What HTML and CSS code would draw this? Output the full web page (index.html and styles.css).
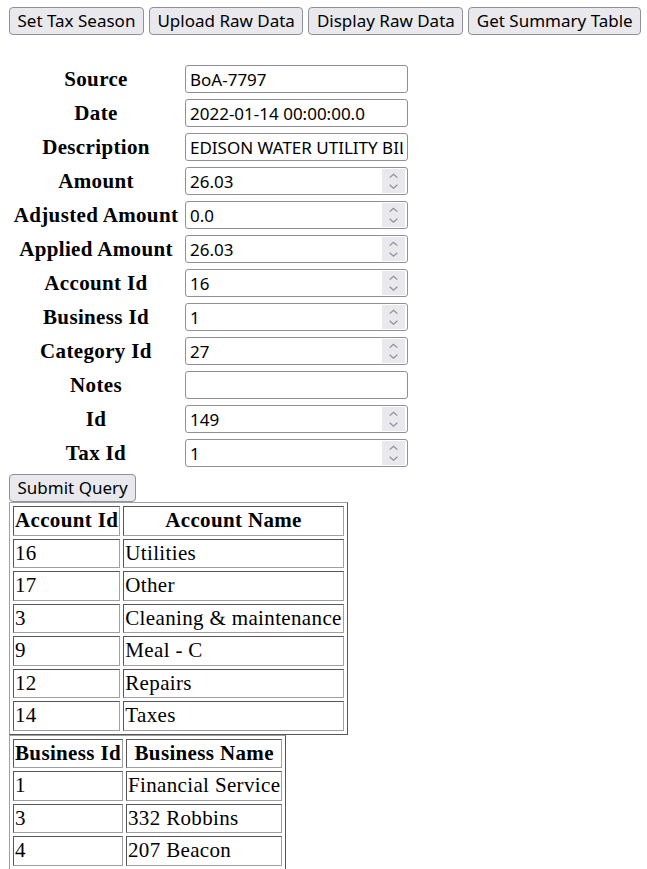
FILE: index.html
```html
<!DOCTYPE html>
<html>
<head>
<meta charset="utf-8">
<title>Tax</title>
<link rel="stylesheet" href="styles.css">
</head>
<body>
<div class="toolbar">
  <button class="btn">Set Tax Season</button>
  <button class="btn">Upload Raw Data</button>
  <button class="btn">Display Raw Data</button>
  <button class="btn">Get Summary Table</button>
</div>

<form class="entry">
  <table class="form-table">
    <tr><th>Source</th><td><span class="field"><input class="inp" type="text" value="BoA-7797"></span></td></tr>
    <tr><th>Date</th><td><span class="field"><input class="inp" type="text" value="2022-01-14 00:00:00.0"></span></td></tr>
    <tr><th>Description</th><td><span class="field"><input class="inp" type="text" value="EDISON WATER UTILITY BILL PAYMENT"></span></td></tr>
    <tr><th>Amount</th><td><span class="field num"><input class="inp" type="text" value="26.03"><span class="spin"><svg viewBox="0 0 23 25" width="23" height="25"><polyline points="7.5,9 11.5,5.5 15.5,9"/><polyline points="7.5,16.5 11.5,20 15.5,16.5"/></svg></span></span></td></tr>
    <tr><th>Adjusted Amount</th><td><span class="field num"><input class="inp" type="text" value="0.0"><span class="spin"><svg viewBox="0 0 23 25" width="23" height="25"><polyline points="7.5,9 11.5,5.5 15.5,9"/><polyline points="7.5,16.5 11.5,20 15.5,16.5"/></svg></span></span></td></tr>
    <tr><th>Applied Amount</th><td><span class="field num"><input class="inp" type="text" value="26.03"><span class="spin"><svg viewBox="0 0 23 25" width="23" height="25"><polyline points="7.5,9 11.5,5.5 15.5,9"/><polyline points="7.5,16.5 11.5,20 15.5,16.5"/></svg></span></span></td></tr>
    <tr><th>Account Id</th><td><span class="field num"><input class="inp" type="text" value="16"><span class="spin"><svg viewBox="0 0 23 25" width="23" height="25"><polyline points="7.5,9 11.5,5.5 15.5,9"/><polyline points="7.5,16.5 11.5,20 15.5,16.5"/></svg></span></span></td></tr>
    <tr><th>Business Id</th><td><span class="field num"><input class="inp" type="text" value="1"><span class="spin"><svg viewBox="0 0 23 25" width="23" height="25"><polyline points="7.5,9 11.5,5.5 15.5,9"/><polyline points="7.5,16.5 11.5,20 15.5,16.5"/></svg></span></span></td></tr>
    <tr><th>Category Id</th><td><span class="field num"><input class="inp" type="text" value="27"><span class="spin"><svg viewBox="0 0 23 25" width="23" height="25"><polyline points="7.5,9 11.5,5.5 15.5,9"/><polyline points="7.5,16.5 11.5,20 15.5,16.5"/></svg></span></span></td></tr>
    <tr><th>Notes</th><td><span class="field"><input class="inp" type="text" value=""></span></td></tr>
    <tr><th>Id</th><td><span class="field num"><input class="inp" type="text" value="149"><span class="spin"><svg viewBox="0 0 23 25" width="23" height="25"><polyline points="7.5,9 11.5,5.5 15.5,9"/><polyline points="7.5,16.5 11.5,20 15.5,16.5"/></svg></span></span></td></tr>
    <tr><th>Tax Id</th><td><span class="field num"><input class="inp" type="text" value="1"><span class="spin"><svg viewBox="0 0 23 25" width="23" height="25"><polyline points="7.5,9 11.5,5.5 15.5,9"/><polyline points="7.5,16.5 11.5,20 15.5,16.5"/></svg></span></span></td></tr>
  </table>
  <div class="submit-row"><button class="btn" type="button">Submit Query</button></div>
</form>

<table class="data-table">
  <tr><th>Account Id</th><th>Account Name</th></tr>
  <tr><td>16</td><td>Utilities</td></tr>
  <tr><td>17</td><td>Other</td></tr>
  <tr><td>3</td><td>Cleaning &amp; maintenance</td></tr>
  <tr><td>9</td><td>Meal - C</td></tr>
  <tr><td>12</td><td>Repairs</td></tr>
  <tr><td>14</td><td>Taxes</td></tr>
</table>
<table class="data-table">
  <tr><th>Business Id</th><th>Business Name</th></tr>
  <tr><td>1</td><td>Financial Service</td></tr>
  <tr><td>3</td><td>332 Robbins</td></tr>
  <tr><td>4</td><td>207 Beacon</td></tr>
</table>
</body>
</html>
```

FILE: styles.css
```css
html, body {
  margin: 0;
  padding: 0;
  background: #ffffff;
  color: #000000;
}

body {
  padding: 7px 0 0 9px;
  font-family: "Liberation Serif", "Times New Roman", serif;
}

.toolbar {
  display: flex;
  gap: 5px;
}

.btn {
  box-sizing: border-box;
  height: 28px;
  margin: 0;
  padding: 0 7.5px;
  border: 1px solid #8f8f9d;
  border-radius: 4px;
  background: #e9e9ed;
  color: #000;
  font-family: "Noto Sans", "Open Sans", sans-serif;
  font-size: 17px;
  line-height: 26px;
  white-space: nowrap;
}

.entry {
  margin: 0;
}

.form-table {
  margin-top: 27px;
  border-collapse: separate;
  border-spacing: 0;
}

.form-table th {
  width: 174px;
  padding: 3px 0;
  text-align: center;
  vertical-align: middle;
  font-size: 21px;
  font-weight: bold;
  letter-spacing: 0.35px;
  white-space: nowrap;
  line-height: 28px;
}

.form-table td {
  padding: 3px 0 3px 2px;
  vertical-align: middle;
  line-height: 0;
}

.field {
  position: relative;
  display: inline-block;
}

.inp {
  box-sizing: border-box;
  width: 223px;
  height: 28px;
  margin: 0;
  padding: 0 4px;
  border: 1px solid #8f8f9d;
  border-radius: 3px;
  background: #fff;
  color: #000;
  font-family: "Noto Sans", "Open Sans", sans-serif;
  font-size: 17px;
  line-height: 26px;
}

.spin {
  position: absolute;
  top: 2px;
  right: 3px;
  width: 23px;
  height: 24px;
  background: #e9e9ed;
  line-height: 0;
}

.spin svg {
  width: 23px;
  height: 24px;
}

.spin polyline {
  fill: none;
  stroke: #8f8f9d;
  stroke-width: 1.3;
}

.submit-row {
  display: flex;
  margin-top: 4px;
}

.data-table {
  border: 1px solid;
  border-color: #a0a0a0 #555555 #555555 #a0a0a0;
  border-collapse: separate;
  border-spacing: 3px;
  font-size: 21px;
  letter-spacing: 0.35px;
}

.data-table th,
.data-table td {
  padding: 1px;
  border: 1px solid;
  border-color: #555555 #a0a0a0 #a0a0a0 #555555;
  line-height: 25.5px;
  white-space: nowrap;
}

.data-table th {
  font-weight: bold;
  text-align: center;
}

.data-table td {
  text-align: left;
}
```
